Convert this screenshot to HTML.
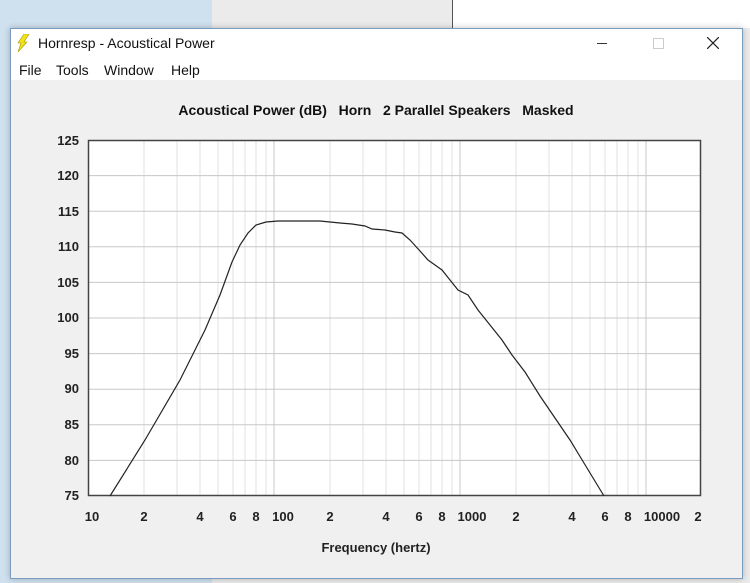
<!DOCTYPE html>
<html><head><style>
body{margin:0;width:750px;height:583px;overflow:hidden;position:relative;background:#cfe0ee;font-family:"Liberation Sans",sans-serif}
.bg1{position:absolute;left:212px;top:0;width:538px;height:583px;background:#ebebeb}
.bg2{position:absolute;left:452px;top:0;width:298px;height:28px;background:#fff;border-left:1px solid #555}
.win{position:absolute;left:10px;top:28px;width:731px;height:549px;background:#f0f0f0;border:1px solid #7a9cc0;box-shadow:0 0 6px rgba(0,0,0,.25)}
.title{position:absolute;left:0;top:0;width:731px;height:30px;background:#fff;font-size:14px;color:#111}
.menu{position:absolute;left:0;top:30px;width:731px;height:21px;background:#fff;font-size:14px;color:#111}
</style></head><body>
<div class="bg1"></div><div class="bg2"></div>
<div class="win">
<div class="title">
<svg style="position:absolute;left:5px;top:5px" width="14" height="18"><polygon points="8,0 13,0 8,8 11,8 2,18 5,9 2,9" fill="#f2e21a" stroke="#a89a00" stroke-width="0.6"/></svg>
<span style="position:absolute;left:27px;top:6px">Hornresp - Acoustical Power</span>
<div style="position:absolute;left:586px;top:14px;width:10px;height:1px;background:#333"></div>
<div style="position:absolute;left:642px;top:9px;width:9px;height:9px;border:1px solid #ccc"></div>
<svg style="position:absolute;left:696px;top:8px" width="12" height="12"><path d="M0 0L12 12M12 0L0 12" stroke="#222" stroke-width="1.2"/></svg>
</div>
<div class="menu"><span style="position:absolute;left:8px;top:3px">File</span><span style="position:absolute;left:45px;top:3px">Tools</span><span style="position:absolute;left:93px;top:3px">Window</span><span style="position:absolute;left:160px;top:3px">Help</span></div>
</div>
<svg style="position:absolute;left:0;top:0" width="750" height="583">
<text x="376" y="115" text-anchor="middle" font-size="14" font-weight="bold" font-family="Liberation Sans" fill="#111" xml:space="preserve">Acoustical Power (dB)   Horn   2 Parallel Speakers   Masked</text>
<rect x="88" y="140" width="613" height="356" fill="#fff"/>
<g stroke="#e2e2e2">
<path d="M144 140V496M177 140V496M200 140V496M218 140V496M233 140V496M245 140V496M256 140V496M266 140V496
M330 140V496M363 140V496M386 140V496M404 140V496M419 140V496M431 140V496M442 140V496M452 140V496
M516 140V496M549 140V496M572 140V496M590 140V496M605 140V496M617 140V496M628 140V496M638 140V496"/>
</g>
<g stroke="#c8c8c8"><path d="M274 140V496M460 140V496M646 140V496"/>
<path d="M88 175.6H701M88 211.2H701M88 246.8H701M88 282.4H701M88 318H701M88 353.6H701M88 389.2H701M88 424.8H701M88 460.4H701"/></g>
<rect x="88.5" y="140.5" width="612" height="355" fill="none" stroke="#444" stroke-width="1.5"/>
<polyline fill="none" stroke="#222" stroke-width="1.2" points="110,496 145,440 180,380 205,330 220,295 232,262 240,245 248,233 256,225 266,222 278,221 320,221 340,223 352,224 365,226 372,229 385,230 395,232 402,233 410,240 420,251 428,260 435,265 442,270 450,280 458,290 468,295 478,310 490,325 502,340 512,355 525,372 540,396 555,418 570,440 587,468 604,496"/>
<g font-size="13" font-weight="bold" fill="#222" font-family="Liberation Sans" text-anchor="end">
<text x="79" y="145">125</text><text x="79" y="180">120</text><text x="79" y="216">115</text><text x="79" y="251">110</text><text x="79" y="287">105</text><text x="79" y="322">100</text><text x="79" y="358">95</text><text x="79" y="393">90</text><text x="79" y="429">85</text><text x="79" y="465">80</text><text x="79" y="500">75</text>
</g>
<g font-size="13" font-weight="bold" fill="#222" font-family="Liberation Sans" text-anchor="middle">
<text x="92" y="521">10</text><text x="144" y="521">2</text><text x="200" y="521">4</text><text x="233" y="521">6</text><text x="256" y="521">8</text><text x="283" y="521">100</text>
<text x="330" y="521">2</text><text x="386" y="521">4</text><text x="419" y="521">6</text><text x="442" y="521">8</text><text x="472" y="521">1000</text>
<text x="516" y="521">2</text><text x="572" y="521">4</text><text x="605" y="521">6</text><text x="628" y="521">8</text><text x="662" y="521">10000</text><text x="698" y="521">2</text>
<text x="376" y="552">Frequency (hertz)</text>
</g>
</svg>
</body></html>
